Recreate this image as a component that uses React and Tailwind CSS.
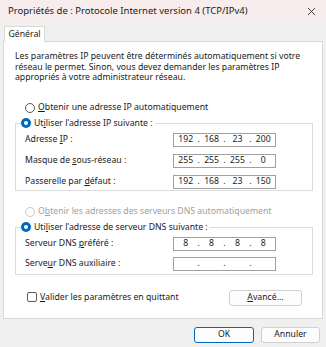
import React from "react";

const Radio = ({ checked, disabled }) => (
  <span
    className={
      checked
        ? "w-[10px] h-[10px] rounded-full bg-[#0067c0] flex items-center justify-center shrink-0"
        : disabled
        ? "w-[10px] h-[10px] rounded-full border border-[#c8c8c8] bg-white shrink-0"
        : "w-[10px] h-[10px] rounded-full border border-[#5a5a5a] bg-white shrink-0"
    }
  >
    {checked && <span className="w-[4px] h-[4px] rounded-full bg-white" />}
  </span>
);

const IpBox = ({ parts }) => (
  <div className="w-[103px] h-[14px] border border-[#a0a0a0] bg-white flex items-center text-[8.7px] text-[#1a1a1a]">
    {parts.map((p, i) => (
      <React.Fragment key={i}>
        <span className="flex-1 text-center">{p}</span>
        {i < 3 && <span>.</span>}
      </React.Fragment>
    ))}
  </div>
);

const Row = ({ label, parts }) => (
  <div className="flex items-center justify-between h-[14px] pl-[9px] pr-[36px]">
    <span>{label}</span>
    <IpBox parts={parts} />
  </div>
);

export default function App() {
  return (
    <div
      className="w-[326px] h-[347px] bg-[#f0f0f0] flex flex-col text-[8.7px] text-[#1a1a1a]"
      style={{ fontFamily: '"Noto Sans", "DejaVu Sans", sans-serif' }}
    >
      {/* Title bar */}
      <div className="h-[22px] bg-[#f8eded] flex items-center justify-between pl-[8px] pr-[10px] text-[9.5px]">
        <span>Propriétés de : Protocole Internet version 4 (TCP/IPv4)</span>
        <svg width="9" height="9" viewBox="0 0 10 10" stroke="#333" strokeWidth="1" fill="none">
          <path d="M1 1L9 9M9 1L1 9" />
        </svg>
      </div>

      {/* Tabs */}
      <div className="px-[4px] pt-[3px] flex">
        <div className="w-[41px] h-[16px] bg-white border border-b-0 border-[#d9d9d9] flex items-center justify-center text-[8.7px] relative top-[1px]">
          Général
        </div>
      </div>

      {/* Panel */}
      <div className="mx-[3px] h-[278px] bg-white border border-[#d9d9d9] flex flex-col px-[11px]">
        <p className="mt-[9px] leading-[10.5px]">
          Les paramètres IP peuvent être déterminés automatiquement si votre
          <br />
          réseau le permet. Sinon, vous devez demander les paramètres IP
          <br />
          appropriés à votre administrateur réseau.
        </p>

        <div className="mt-[19px] flex items-center gap-[3px] pl-[10px] h-[12px]">
          <Radio />
          <span>
            <u>O</u>btenir une adresse IP automatiquement
          </span>
        </div>

        <fieldset className="mt-[3px] border border-[#dcdcdc] h-[74px] mr-[-2px] pt-[3px] flex flex-col gap-[7px]">
          <legend className="ml-[5px] pr-[2px] flex items-center gap-[3px]">
            <Radio checked />
            <span>
              Ut<u>i</u>liser l'adresse IP suivante :
            </span>
          </legend>
          <Row label={<>Adresse <u>I</u>P :</>} parts={["192", "168", "23", "200"]} />
          <Row label={<>Masque de <u>s</u>ous-réseau :</>} parts={["255", "255", "255", "0"]} />
          <Row label={<>Passerelle par <u>d</u>éfaut :</>} parts={["192", "168", "23", "150"]} />
        </fieldset>

        <div className="mt-[15px] flex items-center gap-[3px] pl-[10px] h-[12px] text-[#a0a0a0]">
          <Radio disabled />
          <span>
            O<u>b</u>tenir les adresses des serveurs DNS automatiquement
          </span>
        </div>

        <fieldset className="mt-[3px] border border-[#dcdcdc] h-[54px] mr-[-2px] pt-[3px] flex flex-col gap-[6px]">
          <legend className="ml-[5px] pr-[2px] flex items-center gap-[3px]">
            <Radio checked />
            <span>
              Uti<u>l</u>iser l'adresse de serveur DNS suivante :
            </span>
          </legend>
          <Row label={<>Serveur DNS <u>p</u>référé :</>} parts={["8", "8", "8", "8"]} />
          <Row label={<>Serve<u>u</u>r DNS auxiliaire :</>} parts={["", "", "", ""]} />
        </fieldset>

        <div className="mt-[15px] flex items-center justify-between pl-[12px] pr-[9px]">
          <div className="flex items-center gap-[3px]">
            <span className="w-[10px] h-[10px] rounded-[2px] border border-[#5a5a5a] bg-white" />
            <span>
              <u>V</u>alider les paramètres en quittant
            </span>
          </div>
          <button className="w-[73px] h-[16px] border border-[#d0d0d0] rounded-[3px] bg-[#fdfdfd] text-[8.7px]">
            <u>A</u>vancé...
          </button>
        </div>
      </div>

      {/* Footer buttons */}
      <div className="flex justify-end gap-[7px] pr-[6px] mt-[8px]">
        <button className="w-[60px] h-[16px] border border-[#0067c0] rounded-[3px] bg-[#fdfdfd] text-[8.7px]">
          OK
        </button>
        <button className="w-[59px] h-[16px] border border-[#d0d0d0] rounded-[3px] bg-[#fdfdfd] text-[8.7px]">
          Annuler
        </button>
      </div>
    </div>
  );
}
